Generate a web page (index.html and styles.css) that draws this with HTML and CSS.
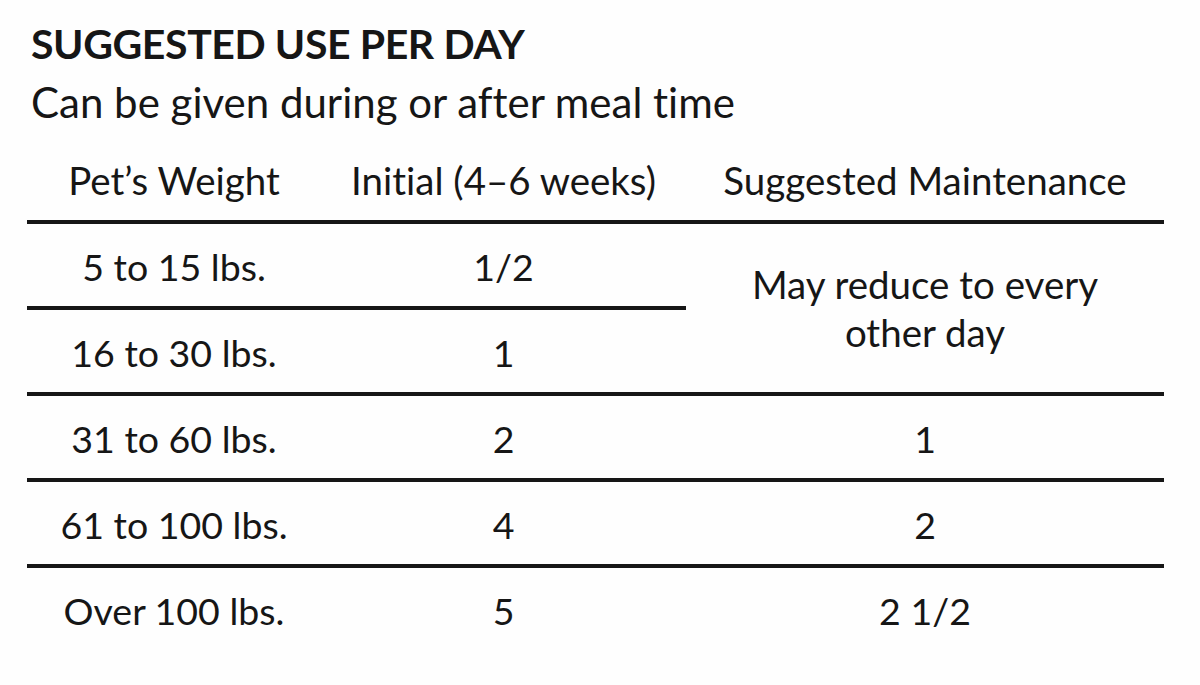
FILE: index.html
```html
<!DOCTYPE html>
<html>
<head>
<meta charset="utf-8">
<link rel="stylesheet" href="styles.css">
</head>
<body>
<div class="page">
  <h1 class="title">SUGGESTED USE PER DAY</h1>
  <p class="subtitle">Can be given during or after meal time</p>
  <table class="dose">
    <colgroup>
      <col class="c1"><col class="c2"><col class="c3">
    </colgroup>
    <thead>
      <tr><th>Pet’s Weight</th><th>Initial (4–6 weeks)</th><th>Suggested Maintenance</th></tr>
    </thead>
    <tbody>
      <tr><td>5 to 15 lbs.</td><td>1/2</td><td rowspan="2" class="span">May reduce to every<br>other day</td></tr>
      <tr><td>16 to 30 lbs.</td><td>1</td></tr>
      <tr><td>31 to 60 lbs.</td><td>2</td><td>1</td></tr>
      <tr><td>61 to 100 lbs.</td><td>4</td><td>2</td></tr>
      <tr class="last"><td>Over 100 lbs.</td><td>5</td><td>2 1/2</td></tr>
    </tbody>
  </table>
</div>
</body>
</html>
```

FILE: styles.css
```css
html, body {
  margin: 0;
  padding: 0;
  background: #fefefe;
}
body {
  width: 1200px;
  height: 685px;
  overflow: hidden;
  font-family: Lato, "Open Sans", sans-serif;
  font-variant-ligatures: none;
  color: #161616;
}
.page {
  padding: 19px 0 0 27px;
}
.title {
  margin: 0 0 0 4px;
  font-size: 41px;
  line-height: 50px;
  font-weight: 700;
  letter-spacing: -0.4px;
}
.subtitle {
  margin: 8px 0 0 4px;
  font-size: 42px;
  line-height: 50px;
  font-weight: 400;
}
.dose {
  margin-top: 30px;
  width: 1137px;
  border-collapse: collapse;
  table-layout: fixed;
  font-size: 37.5px;
}
.c1 { width: 294px; }
.c2 { width: 365px; }
.c3 { width: 478px; }
.dose th {
  font-size: 38.5px;
  font-weight: 400;
  text-align: center;
  padding: 0 0 17px;
  line-height: 46px;
  border-bottom: 4px solid #161616;
}
.dose td {
  text-align: center;
  height: 79px;
  padding: 3px 0 0;
  line-height: 44px;
  border-bottom: 4px solid #161616;
  vertical-align: middle;
}
.dose td.span {
  font-size: 38.5px;
  line-height: 48px;
  padding-top: 0;
}
.dose tr.last td {
  border-bottom: none;
}
```
